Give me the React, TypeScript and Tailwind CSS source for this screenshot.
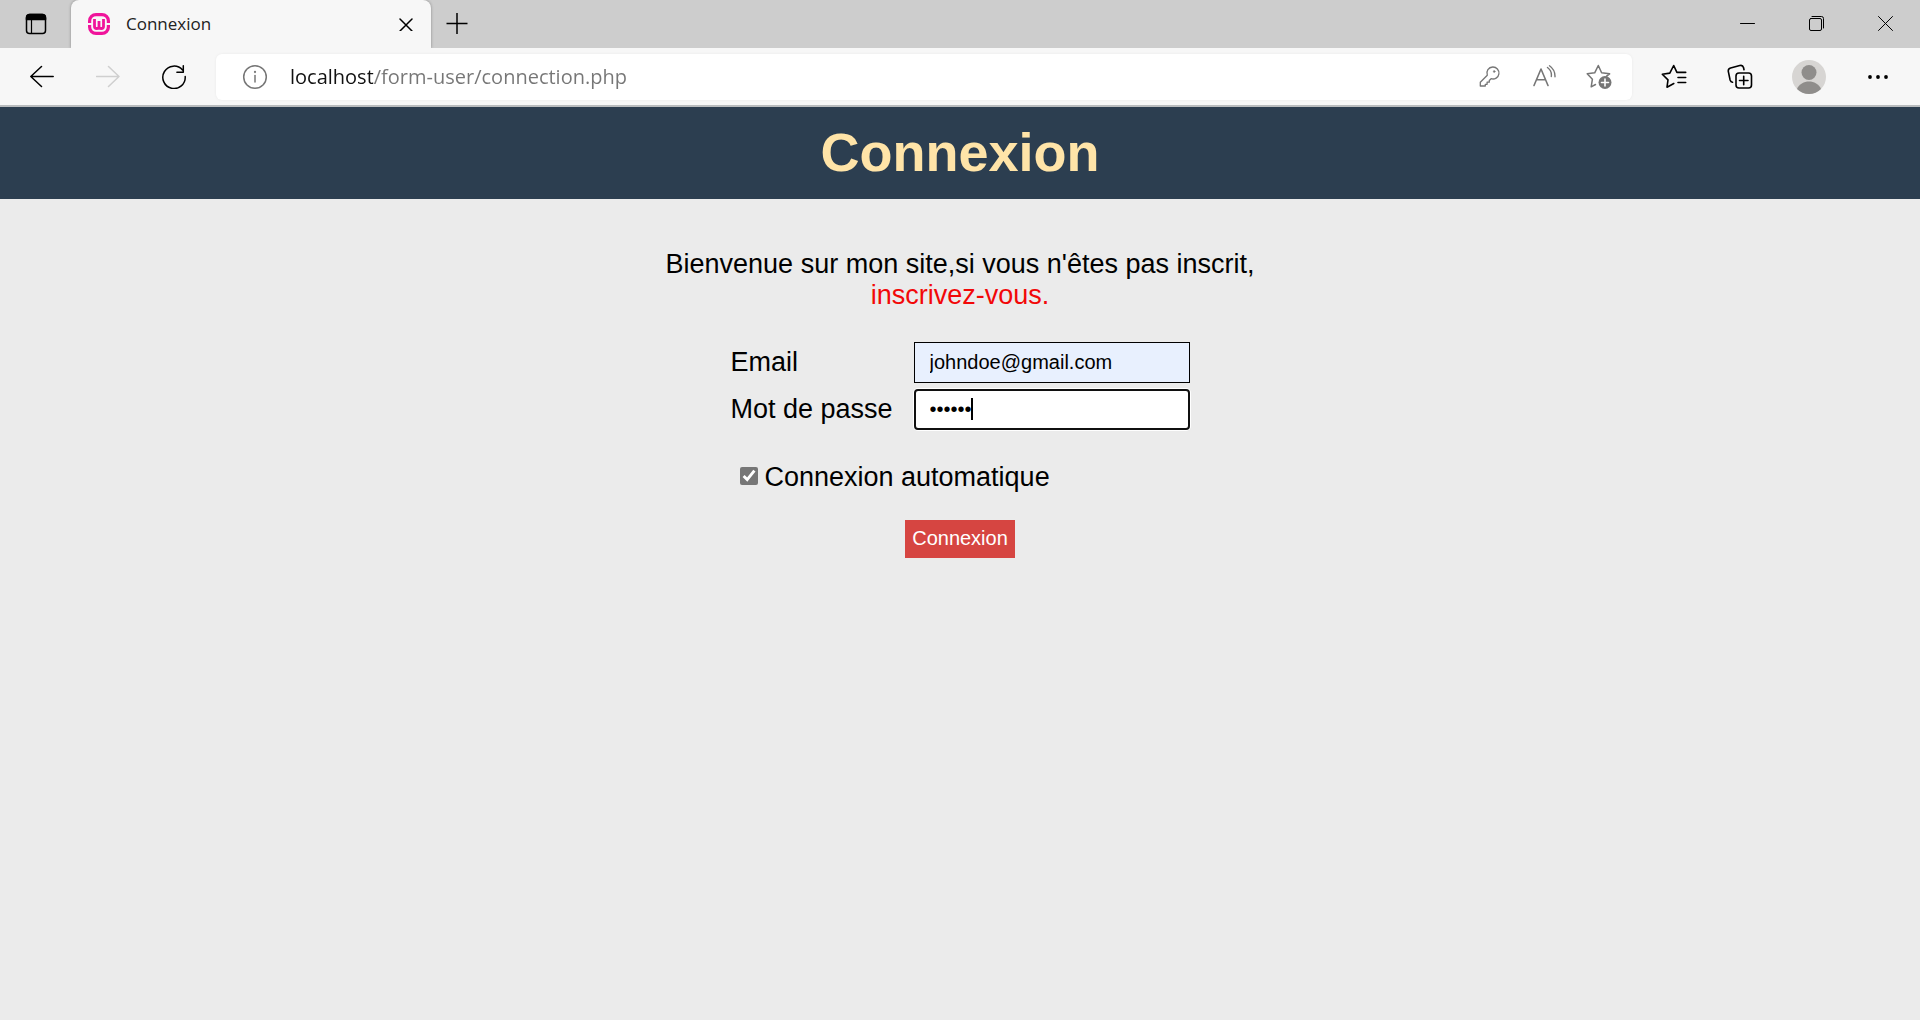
import type { ReactNode } from "react";

const stroke = {
  fill: "none",
  stroke: "currentColor",
  strokeLinecap: "round",
  strokeLinejoin: "round",
} as const;

function Icon({ size = 24, width = 1.5, children }: { size?: number; width?: number; children: ReactNode }) {
  return (
    <svg width={size} height={size} viewBox={`0 0 ${size} ${size}`} {...stroke} strokeWidth={width} aria-hidden="true">
      {children}
    </svg>
  );
}

function IconButton({ label, className, children }: { label: string; className: string; children: ReactNode }) {
  return (
    <button type="button" aria-label={label} className={`flex shrink-0 items-center justify-center ${className}`}>
      {children}
    </button>
  );
}

function TabStrip() {
  return (
    <div className="flex h-12 bg-[#cdcdcd] text-black">
      <IconButton label="Menu des onglets" className="w-[71px]">
        <Icon>
          <rect x="2.500" y="2.500" width="19" height="19" rx="3" />
          <path d="M2.500 7.500V6a3.500 3.500 0 0 1 3.500-3.500h12A3.500 3.500 0 0 1 21.500 6v1.500z" fill="currentColor" />
          <path d="M7.500 7v14" strokeWidth="1.200" />
        </Icon>
      </IconButton>
      <div className="flex w-[360px] items-center rounded-t-lg bg-[#f7f7f7] pl-4 shadow-[0_0_3px_rgba(0,0,0,0.35)]">
        <svg width="24" height="24" viewBox="0 0 24 24" fill="none" stroke="#f0149b" aria-hidden="true">
          <path d="M2.600 11V9A6.400 6.400 0 0 1 9 2.600h6A6.400 6.400 0 0 1 21.400 9v2M2.600 13v2A6.400 6.400 0 0 0 9 21.400h6a6.400 6.400 0 0 0 6.400-6.400v-2" strokeWidth="3.200" />
          <path d="M7.500 7v7.500q0 2 2.200 2 2.300 0 2.300-2V9v5.500q0 2 2.300 2 2.200 0 2.200-2V7" strokeWidth="2.800" />
        </svg>
        <span className="ml-[15px] grow font-['Open_Sans','Noto_Sans',sans-serif] text-[17px] text-[#222]">Connexion</span>
        <IconButton label="Fermer l'onglet" className="h-8 w-[50px]">
          <Icon size={14} width={1.5}>
            <path d="M1 2l12 12M13 2L1 14" />
          </Icon>
        </IconButton>
      </div>
      <IconButton label="Nouvel onglet" className="w-[51px]">
        <Icon width={1.5}>
          <path d="M12 1v21M1.500 11.500h21" strokeLinecap="butt" />
        </Icon>
      </IconButton>
      <div className="ml-auto flex">
        <IconButton label="Réduire" className="w-[69px]">
          <Icon size={16} width={1}>
            <path d="M0.500 7.500h14" />
          </Icon>
        </IconButton>
        <IconButton label="Restaurer" className="w-[69px]">
          <Icon size={16} width={1}>
            <rect x="0.500" y="2.500" width="12" height="12" rx="1.500" />
            <path d="M3 0.500h9.500a2 2 0 0 1 2 2V12" />
          </Icon>
        </IconButton>
        <IconButton label="Fermer" className="w-[69px]">
          <Icon size={16} width={1}>
            <path d="M0.500 0.500l14 14M14.500 0.500l-14 14" />
          </Icon>
        </IconButton>
      </div>
    </div>
  );
}

function Toolbar() {
  return (
    <div className="relative flex h-[59px] items-center border-b-2 border-[#b9bcbe] bg-[#f7f7f7] px-[9px] text-black">
      <IconButton label="Précédent" className="h-10 w-[66px]">
        <Icon>
          <path d="M23.200 11.500H0.800M11.500 1.500l-10.700 10 10.700 10" />
        </Icon>
      </IconButton>
      <IconButton label="Suivant" className="h-10 w-[66px] text-[#cfcfcf]">
        <Icon>
          <path d="M0.500 11.500H23M12.500 1.500l10.500 10-10.500 10" />
        </Icon>
      </IconButton>
      <IconButton label="Actualiser" className="h-10 w-[66px]">
        <Icon>
          <path d="M23.200 11.500A11.200 11.200 0 1 1 20.500 5M21.300 0.800v6.400h-6.400" />
        </Icon>
      </IconButton>
      <div className="ml-[9px] flex h-[46px] min-w-0 grow items-center rounded-md bg-white pr-[6px] text-[#767676] shadow-[0_0_3px_rgba(0,0,0,0.06)]">
        <IconButton label="Informations sur le site" className="h-10 w-[78px]">
          <Icon size={26} width={1.5}>
            <circle cx="13" cy="13" r="11.300" />
            <path d="M13 11.500v6.500" />
            <circle cx="13" cy="8" r="0.400" />
          </Icon>
        </IconButton>
        <input
          type="text"
          aria-label="Adresse"
          defaultValue="localhost/form-user/connection.php"
          className="-ml-1 min-w-0 grow bg-[linear-gradient(to_right,#111_83px,#767676_83px)] bg-clip-text font-['Open_Sans','Noto_Sans',sans-serif] text-[20px] leading-7 text-transparent outline-none"
        />
        <IconButton label="Mot de passe enregistré" className="h-10 w-[55px]">
          <Icon size={22} width={1.3}>
            <path d="M14.700 1a6 6 0 1 1-1.600 11.700l-1.800 1.800v1.700H9.100v2.100H7.300v1.700H2.300v-3.800l7-7A6 6 0 0 1 14.700 1z" />
            <circle cx="16.200" cy="5.500" r="0.900" fill="currentColor" strokeWidth="0.500" />
          </Icon>
        </IconButton>
        <IconButton label="Lecture à voix haute" className="h-10 w-[55px]">
          <Icon width={1.6}>
            <path d="M2 20.500L9 4l7 16.500M4.500 14.800h9" />
            <path d="M15.500 2.500a9.500 9.500 0 0 1 3.800 9M17.500 0.800a13 13 0 0 1 5.500 11" strokeWidth="1.400" />
          </Icon>
        </IconButton>
        <IconButton label="Ajouter aux favoris" className="h-10 w-[55px]">
          <Icon size={26} width={1.5}>
            <path d="M9.500 20.500L5.200 22.800l1.200-7.600-5.200-5.400 7.500-1L12.300 1.500l3.300 7.300 8 1-3 2.400" />
            <circle cx="19" cy="18.500" r="6.500" fill="currentColor" stroke="none" />
            <path d="M19 15v7M15.500 18.500h7" stroke="white" strokeWidth="1.600" />
          </Icon>
        </IconButton>
      </div>
      <div className="ml-[9px] flex">
        <IconButton label="Favoris" className="h-10 w-[66px]">
          <Icon size={26} width={1.6}>
            <path d="M12.800 19.500l-6.800 3.700 1-7.300-5.700-5.600 7.500-1.200L12.700 1.500l3.200 6.900h8.800M17 13.500h7.700M17 18.500h7.700" />
          </Icon>
        </IconButton>
        <IconButton label="Collections" className="h-10 w-[66px]">
          <Icon size={26} width={1.6}>
            <rect x="9" y="9" width="15.500" height="15" rx="3" />
            <path d="M16.700 12.300v8.500M12.500 16.500H21M5.500 18.300c-1.300-.2-2-1-2.400-2.300L1.400 7.800C1 6 1.800 4.500 3.600 4l9.200-2.500c1.800-.5 3.200.3 3.700 2l.5 2.200" />
          </Icon>
        </IconButton>
        <IconButton label="Profil" className="h-10 w-[72px]">
          <svg width="34" height="34" viewBox="0 0 34 34" aria-hidden="true">
            <circle cx="17" cy="17" r="17" fill="#d7d5d3" />
            <circle cx="17" cy="12.500" r="7.500" fill="#8f8d8b" />
            <path d="M5 29c2-5 7-7.500 12-7.500S27 24 29 29a17 17 0 0 1-24 0z" fill="#8f8d8b" />
          </svg>
        </IconButton>
        <IconButton label="Paramètres et plus" className="h-10 w-[66px]">
          <svg width="20" height="4" viewBox="0 0 20 4" fill="currentColor" aria-hidden="true">
            <circle cx="2" cy="2" r="1.900" />
            <circle cx="10" cy="2" r="1.900" />
            <circle cx="18" cy="2" r="1.900" />
          </svg>
        </IconButton>
      </div>
    </div>
  );
}

function LoginPage() {
  return (
    <main className="flex grow flex-col items-center bg-[#ebebeb] font-['Liberation_Sans',Arial,sans-serif] text-[27px] leading-[31px] text-black">
      <header className="w-full bg-[#2c3e50] pt-[14px] pb-4 text-center">
        <h1 className="text-[54px] leading-[62px] font-bold text-[#ffe4a8]">Connexion</h1>
      </header>
      <p className="mt-[50px] text-center">
        Bienvenue sur mon site,si vous n'êtes pas inscrit,
        <br />
        <a href="#inscription" className="text-[#f20808]">
          inscrivez-vous.
        </a>
      </p>
      <form className="mt-[31px] flex flex-col" onSubmit={(e) => e.preventDefault()}>
        <div className="grid grid-cols-[max-content_276px] items-center gap-x-[21px] gap-y-[6px]">
          <label htmlFor="email">Email</label>
          <input
            id="email"
            type="email"
            defaultValue="johndoe@gmail.com"
            className="h-[41px] border border-black bg-[#e8f0fe] px-[15px] text-[20px] leading-6 outline-none"
          />
          <label htmlFor="password">Mot de passe</label>
          <div className="relative flex">
            <input
              id="password"
              type="password"
              defaultValue="secret"
              className="h-[41px] w-full rounded border-2 border-[#101010] bg-white px-[14px] text-[20px] leading-6 shadow-[0_0_0_1px_white] outline-none"
            />
            <span className="absolute top-[9px] left-[57px] h-[22px] w-[2px] bg-black" />
          </div>
        </div>
        <label className="mt-8 ml-[10px] flex items-start gap-[6px]">
          <input type="checkbox" defaultChecked className="mt-[5px] size-[18px] accent-[#767676]" />
          Connexion automatique
        </label>
        <button type="submit" className="mt-[27px] h-[38px] self-center bg-[#d64541] px-[7px] pb-[2px] text-[20px] leading-6 text-white">
          Connexion
        </button>
      </form>
    </main>
  );
}

export default function App() {
  return (
    <div className="flex min-h-screen flex-col">
      <TabStrip />
      <Toolbar />
      <LoginPage />
    </div>
  );
}
